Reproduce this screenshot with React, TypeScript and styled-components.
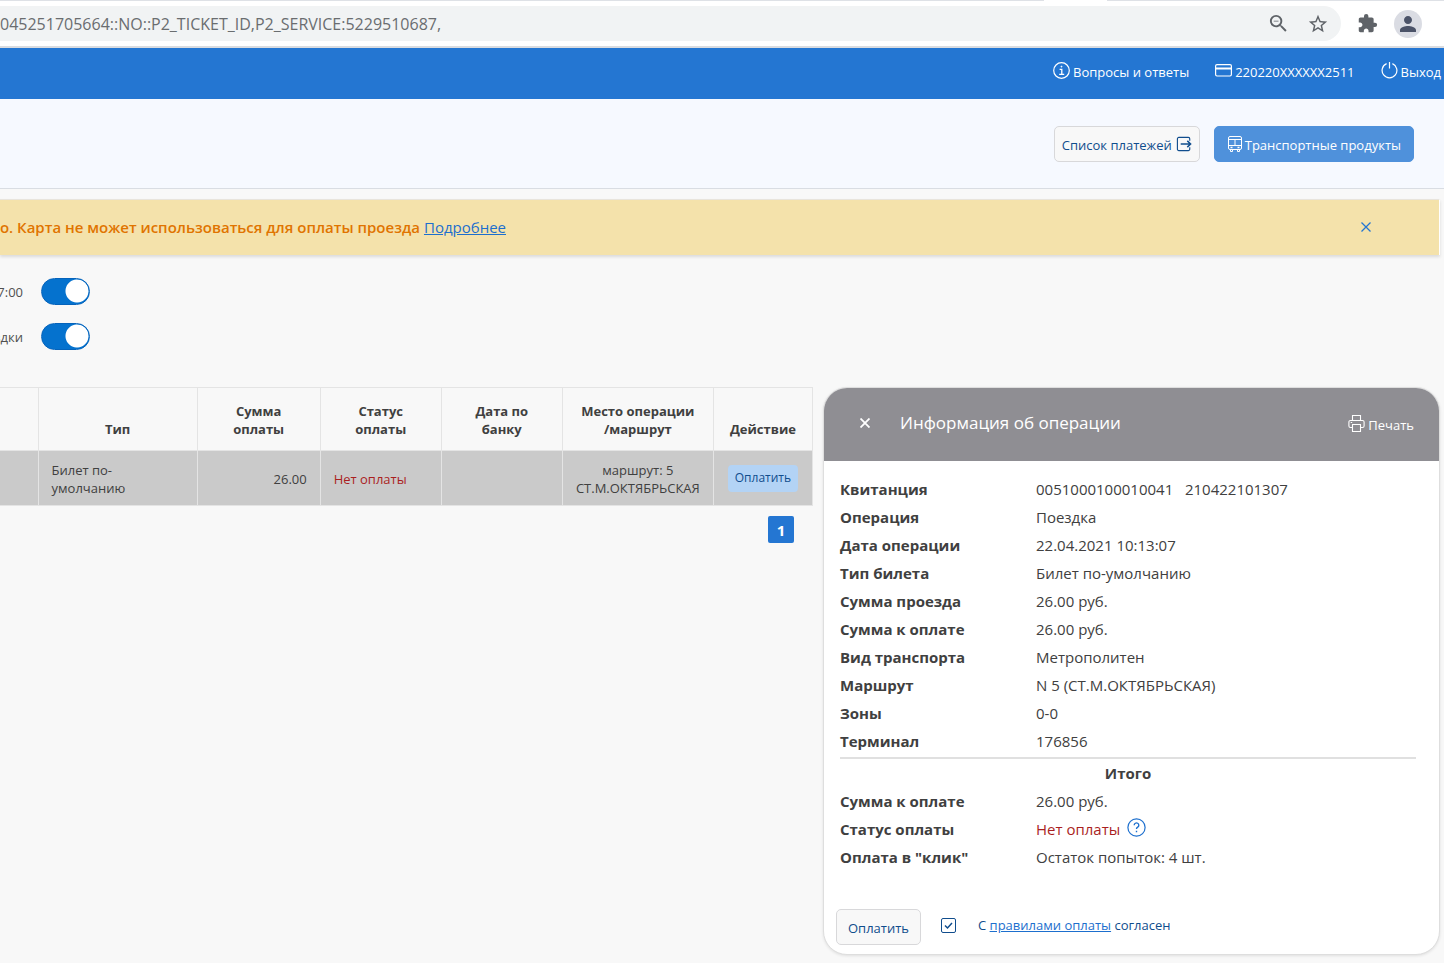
import React from "react";
import styled, { createGlobalStyle } from "styled-components";
import { MdZoomOut, MdStarBorder, MdExtension, MdPerson } from "react-icons/md";

const GlobalStyle = createGlobalStyle`
  * { box-sizing: border-box; }
  html, body { margin: 0; background: #f8f8f8; }
  body, button, input, table {
    font-family: "Open Sans", "Noto Sans", sans-serif;
    font-size: 13px;
    line-height: 18px;
    color: #404040;
  }
  button { border: 0; background: none; padding: 0; cursor: pointer; }
  a { color: #1d6fce; }
`;

const Page = styled.div`
  min-height: 100vh;
  overflow: hidden;
`;

const BrowserBar = styled.div`
  position: relative;
  display: flex;
  align-items: center;
  gap: 16px;
  height: 48px;
  padding: 4px 22px 4px 0;
  background: #ffffff;
  border-top: 1px solid #dee1e6;
  border-bottom: 2px solid #dadce0;
  color: #5f6368;

  /* the active tab opens into the bar */
  &::before {
    content: "";
    position: absolute;
    top: -1px;
    right: 337px;
    width: 63px;
    height: 1px;
    background: #ffffff;
  }
`;

const AddressBar = styled.div`
  display: flex;
  flex: 1;
  align-items: center;
  justify-content: space-between;
  height: 35px;
  padding-right: 12px;
  border-radius: 0 18px 18px 0;
  background: #f1f3f4;
`;

const ClippedText = styled.div<{ $width: number }>`
  display: flex;
  flex: none;
  justify-content: flex-end;
  width: ${(p) => p.$width}px;
  overflow: hidden;
  white-space: nowrap;
`;

const Url = styled.span`
  font-size: 16px;
  line-height: 24px;
  color: #6a6d70;
  white-space: nowrap;
`;

const AddressActions = styled.div`
  display: flex;
  gap: 17px;
`;

const IconButton = styled.button`
  display: flex;
  align-items: center;
  justify-content: center;
  color: inherit;
`;

const Avatar = styled(IconButton)`
  width: 28px;
  height: 28px;
  border-radius: 50%;
  background: #dadce3;
  color: #4b5368;
`;

const TopBar = styled.header`
  display: flex;
  justify-content: flex-end;
  gap: 26px;
  height: 51px;
  padding: 14px 3px 0 0;
  background: #2476d2;
`;

const TopLink = styled.a`
  color: #ffffff;
  text-decoration: none;
  white-space: nowrap;
`;

const InlineIcon = styled.svg`
  width: 17px;
  height: 17px;
  margin-right: 3px;
  vertical-align: -2px;
  fill: none;
  stroke: currentColor;
`;

const ActionBar = styled.div`
  display: flex;
  justify-content: flex-end;
  gap: 14px;
  height: 90px;
  padding: 27px 30px;
  background: #f6f9ff;
  border-bottom: 1px solid #d9dde3;
`;

const Button = styled.button<{ $primary?: boolean; $pad?: number }>`
  height: 36px;
  padding: 1px ${(p) => p.$pad ?? 8}px 0;
  border: 1px solid ${(p) => (p.$primary ? "#4f91db" : "#d8d8da")};
  border-radius: 5px;
  background: ${(p) => (p.$primary ? "#4f91db" : "#f8f8f8")};
  color: ${(p) => (p.$primary ? "#ffffff" : "#104d8d")};
  white-space: nowrap;
  svg {
    width: 16px;
    height: 16px;
    margin-right: ${(p) => (p.$primary ? 2 : 0)}px;
    margin-left: ${(p) => (p.$primary ? 0 : 4)}px;
  }
`;

const Banner = styled.div`
  display: flex;
  align-items: center;
  justify-content: space-between;
  height: 56px;
  margin: 10px 4px 0 0;
  padding: 0 66px 2px 0;
  border-top: 1px solid #e8e4dc;
  border-right: 1px solid #ffffff;
  background: #f4e2ab;
  box-shadow: 0 2px 3px rgba(0, 0, 0, 0.12);
`;

const BannerText = styled(ClippedText)`
  gap: 4px;
  font-size: 15px;
  line-height: 24px;
  color: #e07400;
  b { font-weight: 600; }
`;

const BannerClose = styled(IconButton)`
  width: 14px;
  height: 14px;
  color: #2476d2;
`;

const Filters = styled.div`
  display: flex;
  flex-direction: column;
  gap: 18px;
  padding: 23px 0 37px;
`;

const FilterRow = styled.label`
  display: flex;
  align-items: center;
  gap: 18px;
  color: #505050;
`;

const Switch = styled.input`
  appearance: none;
  width: 49px;
  height: 27px;
  margin: 0;
  border-radius: 14px;
  border: 1px solid #0563bb;
  background: radial-gradient(circle at 36px 13px, #ffffff 11px, #0572ce 12px) border-box;
  cursor: pointer;
`;

const Content = styled.main`
  display: grid;
  grid-template-columns: minmax(0, 813fr) minmax(0, 617fr);
  gap: 10px;
  align-items: start;
  padding: 0 4px 8px 0;
`;

const Operations = styled.section`
  display: flex;
  flex-direction: column;
`;

const OperationsTable = styled.table`
  width: 100%;
  table-layout: fixed;
  border-collapse: collapse;
`;

const HeadCell = styled.th`
  height: 63px;
  padding: 0 12px 12px;
  border: 1px solid #e4e4e4;
  border-left-width: ${(p) => (p["aria-hidden"] ? 0 : 1)}px;
  vertical-align: bottom;
  font-weight: 700;
`;

const Cell = styled.td<{ $align?: string; $alert?: boolean }>`
  height: 55px;
  padding: 2px 13px 0;
  border: 1px solid #e4e4e4;
  background: #cacaca;
  text-align: ${(p) => p.$align ?? "left"};
  color: ${(p) => (p.$alert ? "#aa1f1f" : "#404040")};
  white-space: nowrap;
  &:first-child { border-left: 0; }
`;

const PayChip = styled.button`
  display: block;
  height: 27px;
  width: 70px;
  margin: 0 auto 2px;
  border-radius: 4px;
  background: #b3d3f5;
  color: #104d8d;
  font-size: 12px;
`;

const PageNumber = styled.button`
  align-self: flex-end;
  width: 26px;
  height: 27px;
  margin: 10px 19px 0 0;
  border-radius: 2px;
  background: #2476d2;
  color: #ffffff;
  font-size: 15px;
  font-weight: 700;
`;

const Card = styled.section`
  overflow: hidden;
  border: 1px solid #dedede;
  border-radius: 24px;
  background: #ffffff;
  box-shadow: 0 1px 3px rgba(0, 0, 0, 0.1);
`;

const CardHeader = styled.div`
  display: flex;
  align-items: center;
  height: 73px;
  padding: 0 25px 3px 32px;
  background: #8f8e93;
  color: #ffffff;
`;

const CardTitle = styled.h2`
  flex: 1;
  margin: 0 0 0 27px;
  font-size: 17px;
  line-height: 28px;
  font-weight: 400;
`;

const PrintButton = styled.button`
  color: #ffffff;
  padding-top: 3px;
`;

const CardClose = styled(IconButton)`
  width: 17px;
  height: 17px;
`;

const CardBody = styled.div`
  padding: 14px 23px 0 16px;
`;

const Details = styled.table`
  width: 100%;
  border-collapse: collapse;
  font-size: 15px;
  th, td {
    height: 28px;
    padding: 0;
    font-size: 15px;
    line-height: 28px;
    text-align: left;
  }
  th { width: 196px; }
`;

const Label = styled.th`
  font-weight: 700;
`;

const Value = styled.td<{ $alert?: boolean }>`
  color: ${(p) => (p.$alert ? "#aa1f1f" : "#404040")};
  white-space: pre;
`;

const TotalTitle = styled.h3`
  margin: 2px 0 0;
  border-top: 2px solid #e0e0e0;
  font-size: 15px;
  line-height: 28px;
  font-weight: 700;
  text-align: center;
`;

const HelpButton = styled.button`
  margin-left: 7px;
  color: #1d6fce;
  svg { width: 19px; height: 19px; margin: 0; vertical-align: -2px; }
`;

const CardFooter = styled.div`
  display: flex;
  align-items: center;
  padding: 38px 12px 9px;
`;

const Agreement = styled.div`
  display: flex;
  align-items: center;
  margin: 0 0 4px 20px;
  color: #104d8d;
`;

const Checkbox = styled.input`
  appearance: none;
  width: 15px;
  height: 15px;
  margin: 0 22px 0 0;
  border: 1px solid #104d8d;
  border-radius: 2px;
  background: #ffffff;
  &:checked {
    background: no-repeat center / 13px url("data:image/svg+xml,%3Csvg xmlns='http://www.w3.org/2000/svg' viewBox='0 0 13 13'%3E%3Cpath d='M3 6.5 5.5 9 10 4' fill='none' stroke='%23104d8d' stroke-width='1.5'/%3E%3C/svg%3E");
  }
`;

const InfoIcon = () => (
  <InlineIcon viewBox="0 0 17 17" aria-hidden>
    <circle cx="8.5" cy="8.5" r="7.8" strokeWidth="1.2" />
    <path d="M6.6 7.3h2.2v5M6.2 12.3h5" strokeWidth="1.3" />
    <circle cx="8.5" cy="4.6" r="0.6" fill="currentColor" strokeWidth="0.6" />
  </InlineIcon>
);

const CardIcon = () => (
  <InlineIcon viewBox="0 0 17 17" aria-hidden>
    <rect x="0.6" y="2.6" width="15.8" height="11.4" rx="1.4" strokeWidth="1.2" />
    <path d="M0.6 6.5h15.8" strokeWidth="2" />
  </InlineIcon>
);

const PowerIcon = () => (
  <InlineIcon viewBox="0 0 17 17" aria-hidden>
    <path d="M5.6 1.6a7.4 7.4 0 1 0 5.8 0M8.5 0v6.6" strokeWidth="1.2" />
  </InlineIcon>
);

const ExitIcon = () => (
  <InlineIcon viewBox="0 0 17 17" aria-hidden>
    <path d="M14.6 5V3a1.5 1.5 0 0 0-1.5-1.5H3A1.5 1.5 0 0 0 1.5 3v11A1.5 1.5 0 0 0 3 15.5h10.1a1.5 1.5 0 0 0 1.5-1.5v-2" strokeWidth="1.2" />
    <path d="M5 8.5h10.5M12 5.2l3.5 3.3-3.5 3.3" strokeWidth="1.6" />
  </InlineIcon>
);

const BusIcon = () => (
  <InlineIcon viewBox="0 0 16 16" aria-hidden>
    <rect x="1.5" y="0.5" width="13" height="13" rx="1.5" />
    <path d="M1.5 3.5h13M1.5 9.5h13M8 3.5v6M3.5 13.5v2h2v-2M10.5 13.5v2h2v-2" />
    <path d="M3.5 11.5h2M10.5 11.5h2" strokeWidth="1.4" />
  </InlineIcon>
);

const PrinterIcon = () => (
  <InlineIcon viewBox="0 0 17 17" aria-hidden>
    <path d="M4.5 5.5v-5h8v5M4.5 12.5h-2a1.6 1.6 0 0 1-1.6-1.6V7.1a1.6 1.6 0 0 1 1.6-1.6h12a1.6 1.6 0 0 1 1.6 1.6v3.8a1.6 1.6 0 0 1-1.6 1.6h-2M4.5 9.5h8v7h-8zM2.7 7.5h1.5" strokeWidth="1.1" />
  </InlineIcon>
);

const HelpIcon = () => (
  <InlineIcon viewBox="0 0 19 19" aria-hidden>
    <circle cx="9.5" cy="9.5" r="8.6" strokeWidth="1.2" />
    <path d="M7.2 7.2a2.3 2.3 0 1 1 3.5 2c-.8.5-1.2.9-1.2 1.9M9.5 12.7v1.5" strokeWidth="1.4" />
  </InlineIcon>
);

const CrossIcon = ({ weight }: { weight: number }) => (
  <svg width="10" height="10" viewBox="0 0 10 10" fill="none" stroke="currentColor" strokeWidth={weight} aria-hidden>
    <path d="M0.5 0.5l9 9M9.5 0.5l-9 9" />
  </svg>
);

const columnWidths = [38, 159, 123, 121, 121, 151, 99];

const details = [
  ["Квитанция", "0051000100010041   210422101307"],
  ["Операция", "Поездка"],
  ["Дата операции", "22.04.2021 10:13:07"],
  ["Тип билета", "Билет по-умолчанию"],
  ["Сумма проезда", "26.00 руб."],
  ["Сумма к оплате", "26.00 руб."],
  ["Вид транспорта", "Метрополитен"],
  ["Маршрут", "N 5 (СТ.М.ОКТЯБРЬСКАЯ)"],
  ["Зоны", "0-0"],
  ["Терминал", "176856"],
];

export default function App() {
  return (
    <Page>
      <GlobalStyle />
      <BrowserBar>
        <AddressBar>
          <Url>045251705664::NO::P2_TICKET_ID,P2_SERVICE:5229510687,</Url>
          <AddressActions>
            <IconButton aria-label="Масштаб"><MdZoomOut size={23} /></IconButton>
            <IconButton aria-label="Добавить в закладки"><MdStarBorder size={22} /></IconButton>
          </AddressActions>
        </AddressBar>
        <IconButton aria-label="Расширения"><MdExtension size={21} /></IconButton>
        <Avatar aria-label="Профиль"><MdPerson size={24} /></Avatar>
      </BrowserBar>

      <TopBar>
        <TopLink href="#faq"><InfoIcon />Вопросы и ответы</TopLink>
        <TopLink href="#card"><CardIcon />220220XXXXXX2511</TopLink>
        <TopLink href="#logout"><PowerIcon />Выход</TopLink>
      </TopBar>

      <ActionBar>
        <Button $pad={7}>Список платежей<ExitIcon /></Button>
        <Button $primary $pad={12}><BusIcon />Транспортные продукты</Button>
      </ActionBar>

      <Banner>
        <BannerText $width={506}>
          <b>о. Карта не может использоваться для оплаты проезда</b>
          <a href="#more">Подробнее</a>
        </BannerText>
        <BannerClose aria-label="Закрыть"><CrossIcon weight={1.3} /></BannerClose>
      </Banner>

      <Filters>
        <FilterRow>
          <ClippedText $width={23}>7:00</ClippedText>
          <Switch type="checkbox" defaultChecked />
        </FilterRow>
        <FilterRow>
          <ClippedText $width={23}>здки</ClippedText>
          <Switch type="checkbox" defaultChecked />
        </FilterRow>
      </Filters>

      <Content>
        <Operations>
          <OperationsTable>
            <colgroup>
              {columnWidths.map((width, i) => <col key={i} width={width} />)}
            </colgroup>
            <thead>
              <tr>
                <HeadCell aria-hidden />
                <HeadCell>Тип</HeadCell>
                <HeadCell>Сумма<br />оплаты</HeadCell>
                <HeadCell>Статус<br />оплаты</HeadCell>
                <HeadCell>Дата по<br />банку</HeadCell>
                <HeadCell>Место операции<br />/маршрут</HeadCell>
                <HeadCell>Действие</HeadCell>
              </tr>
            </thead>
            <tbody>
              <tr>
                <Cell />
                <Cell>Билет по-<br />умолчанию</Cell>
                <Cell $align="right">26.00</Cell>
                <Cell $alert>Нет оплаты</Cell>
                <Cell />
                <Cell $align="center">маршрут: 5<br />СТ.М.ОКТЯБРЬСКАЯ</Cell>
                <Cell $align="center"><PayChip>Оплатить</PayChip></Cell>
              </tr>
            </tbody>
          </OperationsTable>
          <PageNumber>1</PageNumber>
        </Operations>

        <Card>
          <CardHeader>
            <CardClose aria-label="Закрыть"><CrossIcon weight={1.8} /></CardClose>
            <CardTitle>Информация об операции</CardTitle>
            <PrintButton><PrinterIcon />Печать</PrintButton>
          </CardHeader>
          <CardBody>
            <Details>
              <tbody>
                {details.map(([label, value]) => (
                  <tr key={label}><Label scope="row">{label}</Label><Value>{value}</Value></tr>
                ))}
              </tbody>
            </Details>
            <TotalTitle>Итого</TotalTitle>
            <Details>
              <tbody>
                <tr><Label scope="row">Сумма к оплате</Label><Value>26.00 руб.</Value></tr>
                <tr>
                  <Label scope="row">Статус оплаты</Label>
                  <Value $alert>Нет оплаты<HelpButton aria-label="Справка"><HelpIcon /></HelpButton></Value>
                </tr>
                <tr><Label scope="row">Оплата в "клик"</Label><Value>Остаток попыток: 4 шт.</Value></tr>
              </tbody>
            </Details>
          </CardBody>
          <CardFooter>
            <Button $pad={11}>Оплатить</Button>
            <Agreement>
              <Checkbox id="agree" type="checkbox" defaultChecked />
              <label htmlFor="agree">С <a href="#rules">правилами оплаты</a> согласен</label>
            </Agreement>
          </CardFooter>
        </Card>
      </Content>
    </Page>
  );
}
